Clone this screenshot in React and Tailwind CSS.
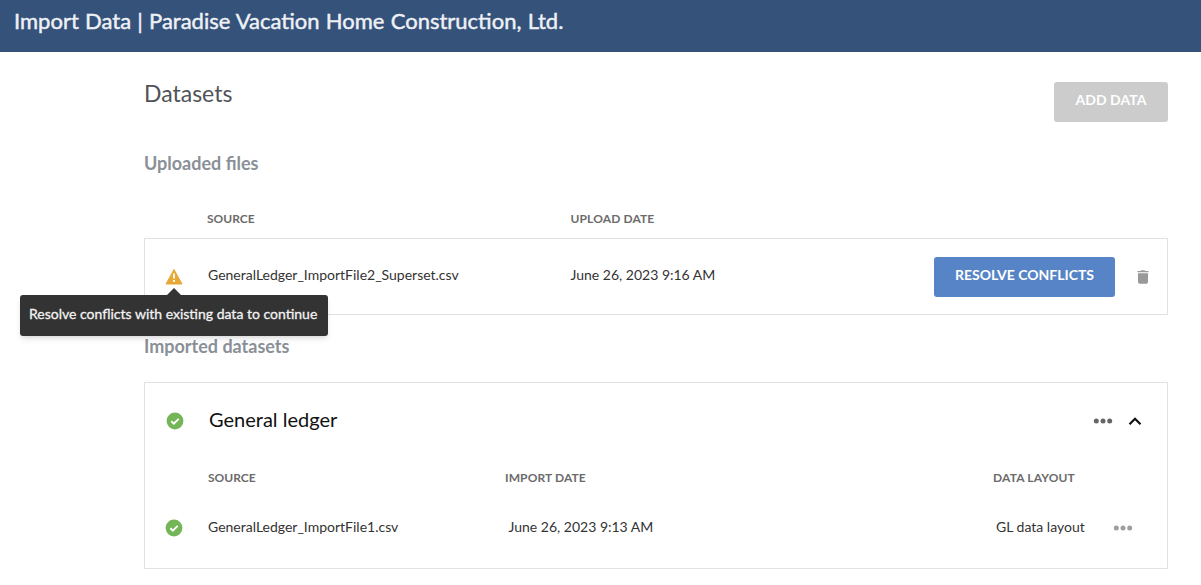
const Check = () => (
  <svg width="18" height="18" viewBox="0 0 18 18" className="block">
    <circle cx="9" cy="9" r="8.4" fill="#74b657" />
    <path d="M5.3 9.300l2.500 2.400 4.900-4.900" fill="none" stroke="#fff" strokeWidth="1.9" />
  </svg>
);

const Dots = ({ color }) => (
  <svg width="20" height="6" viewBox="0 0 20 6" className="block" fill={color}>
    <circle cx="3.300" cy="3" r="2.500" />
    <circle cx="10" cy="3" r="2.500" />
    <circle cx="16.700" cy="3" r="2.500" />
  </svg>
);

export default function App() {
  return (
    <div className="h-[585px] overflow-hidden bg-white font-['Lato',sans-serif] text-[#333]">
      <header className="h-[52px] bg-[#35527b] pt-[6px] pl-[14px] text-[22px] leading-[30px] whitespace-nowrap text-[#eef1f5] [word-spacing:0.6px] [-webkit-text-stroke:0.45px_#eef1f5]">
        Import Data | Paradise Vacation Home Construction, Ltd.
      </header>
      <main className="ml-[144px] w-[1024px]">
        <div className="flex h-[95px] items-start justify-between pt-[30px]">
          <h1 className="-mt-px text-[23px] leading-[24px] text-[#505258]">Datasets</h1>
          <button className="h-10 w-[114px] rounded-[3px] bg-[#cccccc] pb-[4px] text-[14px] leading-[20px] font-bold tracking-[0.06px] text-white">ADD DATA</button>
        </div>
        <h2 className="h-[63px] pt-[4px] text-[18px] leading-[24px] font-bold text-[#8a9097]">Uploaded files</h2>
        <div className="flex h-[28px] text-[12px] leading-[18px] font-bold text-[#6b6b6b]">
          <span className="ml-[63px] w-[363.500px]">SOURCE</span>
          <span className="tracking-[0.12px]">UPLOAD DATE</span>
        </div>
        <section className="flex h-[77px] items-start border border-[#e2e2e2] text-[14px] leading-[20px]">
          <div className="relative mt-[29px] ml-[20px] w-[43px]">
            <svg width="18" height="18" viewBox="0 0 18 18" className="block">
              <path d="M9 1.500L17 16H1z" fill="#e6a837" stroke="#e6a837" strokeLinejoin="round" />
              <path d="M9 5.500v5M9 12v2" stroke="#fff" strokeWidth="1.800" />
            </svg>
            <div role="tooltip" className="absolute top-[27px] left-[-145px] z-10 h-[41px] w-[308px] rounded-[3px] bg-[#333] pl-[9px] text-left text-[14px] leading-[38px] whitespace-nowrap text-[#f2f2f2] shadow-md [-webkit-text-stroke:0.3px_#f2f2f2]">
              <svg width="16" height="8" className="absolute -top-[7.500px] left-[146px]" viewBox="0 0 16 8"><path d="M0 8L8 0l8 8z" fill="#333" /></svg>
              Resolve conflicts with existing data to continue
            </div>
          </div>
          <span className="mt-[26px] w-[362.500px]">GeneralLedger_ImportFile2_Superset.csv</span>
          <span className="mt-[26px] w-[363.500px]">June 26, 2023 9:16 AM</span>
          <button className="mt-[18px] h-10 w-[181px] rounded-[3px] bg-[#5684c6] pb-1 text-[14px] font-bold text-white">RESOLVE CONFLICTS</button>
          <svg width="12" height="14" viewBox="0 0 12 14" className="mt-[31px] ml-[22px]" fill="#999">
            <path d="M.5 1h3L4.500.3h3l1 .7h3v1.200H.5zM1 3.300h10v8.700q0 1.700-1.700 1.700H2.700Q1 13.700 1 12z" />
          </svg>
        </section>
        <h2 className="h-[67px] pt-[19px] text-[18px] leading-[24px] font-bold text-[#8a9097]">Imported datasets</h2>
        <section className="h-[187px] border border-[#e2e2e2]">
          <div className="flex h-[86px] items-start pt-[26px]">
            <div className="mt-[3px] ml-[21px] w-[43px]"><Check /></div>
            <h3 className="-mt-[2px] w-[884px] text-[20px] leading-[24px] text-[#111]">General ledger</h3>
            <div className="mt-[9px]"><Dots color="#666" /></div>
            <svg width="14" height="10" viewBox="0 0 14 10" className="mt-[7px] ml-[15px]" fill="none" stroke="#111" strokeWidth="2.200"><path d="M1.500 8.200L7 2.800l5.500 5.400" /></svg>
          </div>
          <div className="flex h-[47px] text-[12px] leading-[18px] font-bold text-[#6b6b6b]">
            <span className="ml-[63px] w-[297px]">SOURCE</span>
            <span className="w-[488px] tracking-[0.1px]">IMPORT DATE</span>
            <span className="tracking-[0.15px]">DATA LAYOUT</span>
          </div>
          <div className="flex items-start text-[14px] leading-[22px]">
            <div className="mt-[3px] ml-[20px] w-[43px]"><Check /></div>
            <span className="w-[300.500px]">GeneralLedger_ImportFile1.csv</span>
            <span className="w-[487.500px]">June 26, 2023 9:13 AM</span>
            <span className="w-[117px]">GL data layout</span>
            <div className="mt-[9px]"><Dots color="#9e9e9e" /></div>
          </div>
        </section>
      </main>
    </div>
  );
}
